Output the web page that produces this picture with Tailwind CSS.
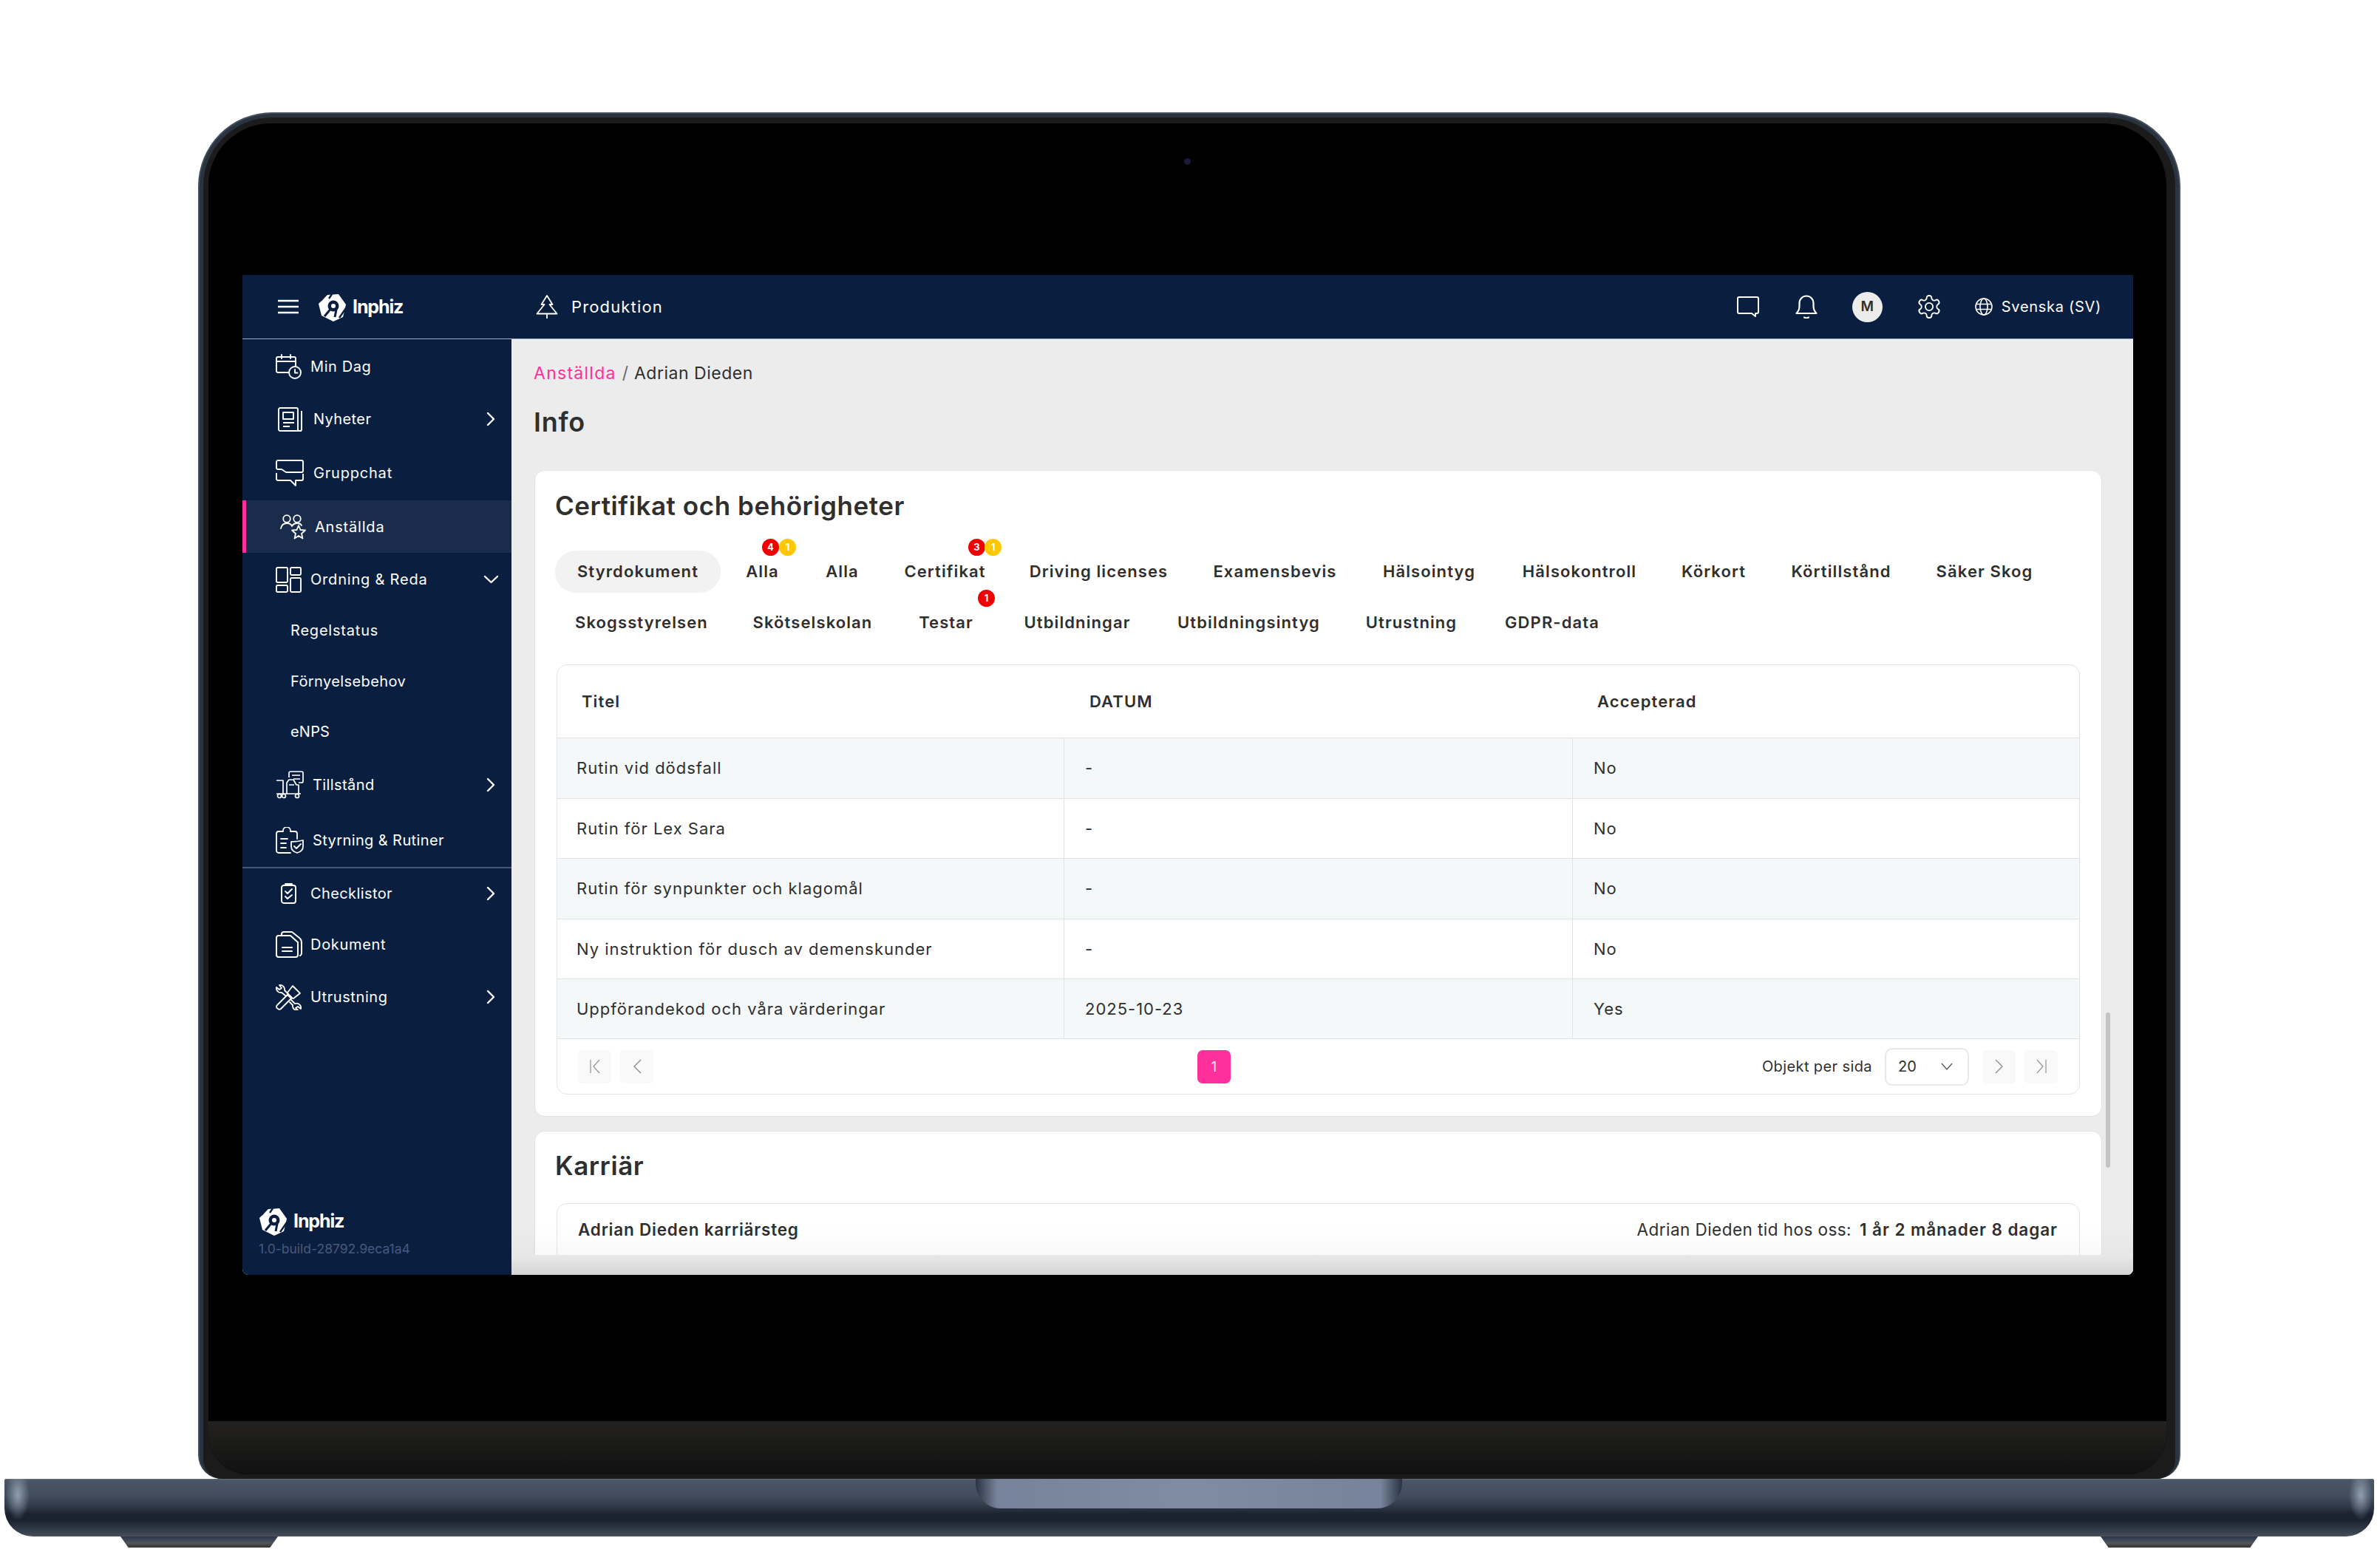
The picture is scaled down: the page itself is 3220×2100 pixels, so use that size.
<!DOCTYPE html>
<html lang="sv">
<head>
<meta charset="utf-8">
<title>Inphiz</title>
<script src="https://cdn.jsdelivr.net/npm/@tailwindcss/browser@4"></script>
</head>
<body class="bg-white">
<div class="w-[3220px] h-[2100px] overflow-hidden bg-white pt-[152px] font-[Inter,sans-serif] text-[#2f2f2f]">

  <!-- Lid -->
  <div class="ml-[268px] w-[2682px] h-[1849px] rounded-t-[100px] rounded-b-[32px] bg-[#434e5c] pt-[2px] px-[2px]">
    <div class="w-full h-[1847px] rounded-t-[98px] rounded-b-[30px] bg-[#2a3340] pt-[5px] px-[5px]">
      <div class="w-full h-[1842px] rounded-t-[93px] rounded-b-[26px] bg-[#1b1b1c] pt-[8px] pb-[6px] pl-[7px] pr-[8px]">
      <div class="relative w-[2649px] h-[1828px] rounded-t-[84px] rounded-b-[54px] bg-black overflow-hidden flex flex-col pt-[205px] pl-[46px]">
        <div class="absolute left-[1320px] top-[47px] w-[9px] h-[9px] rounded-full bg-[#1a1a3c]"></div>

        <!-- Screen -->
        <div class="w-[2558px] h-[1353px] shrink-0 rounded-b-[8px] overflow-hidden flex flex-col bg-[#ececec]">

          <!-- Top bar -->
          <header class="h-[87px] shrink-0 bg-[#0a1f40] border-b border-[#9fb0c6] flex items-center text-white">
            <div class="w-[364px] shrink-0 flex items-center pl-[48px]">
              <svg class="w-[28px] h-[20px]" viewBox="0 0 28 20" fill="none" stroke="#fff" stroke-width="2.4"><path d="M0 2h28M0 10h28M0 18h28"/></svg>
              <svg class="w-[40px] h-[41px] ml-[26px]" viewBox="0 0 40 41"><polygon fill="#fff" points="13,4 28,3 38,17 34,34 21,40 5,32 1,16"/><path d="M13 0 4 12M21 0l-6 9M38 22l-9 13" stroke="#0a1f40" stroke-width="2.400" fill="none"/><circle cx="21" cy="19" r="7.500" fill="#0a1f40"/><path d="M19 21 9 33M25 24l-2 10" stroke="#0a1f40" stroke-width="3"/><circle cx="21" cy="19" r="3" fill="#fff"/></svg>
              <span class="ml-[7px] text-[25px] font-bold tracking-[-0.045em] leading-none">Inphiz</span>
            </div>
            <svg class="w-[30px] h-[32px] ml-[33px]" viewBox="0 0 30 32" fill="none" stroke="#fff" stroke-width="1.800" stroke-linejoin="round"><path d="M15 1 7.500 13h4L1.500 25.500h27L18.500 13h4zM15 25.500V32"/></svg>
            <span class="ml-[18px] text-[22px] font-normal tracking-[0.052em]">Produktion</span>
            <div class="ml-auto pr-[43px] flex items-center">
              <svg class="w-[30px] h-[28px]" viewBox="0 0 30 28" fill="none" stroke="#fff" stroke-width="2" stroke-linejoin="round"><path d="M3 1h24a2 2 0 0 1 2 2v18a2 2 0 0 1-2 2h-2v4l-5-4H3a2 2 0 0 1-2-2V3a2 2 0 0 1 2-2z"/></svg>
              <svg class="w-[30px] h-[32px] ml-[49px]" viewBox="0 0 30 32" fill="none" stroke="#fff" stroke-width="2.200" stroke-linecap="round" stroke-linejoin="round"><path d="M1.500 25h27c-3-3-4-5-4-10V11a9.500 9.500 0 0 0-19 0v4c0 5-1 7-4 10z"/><path d="M12 30.500q3 1.500 6 0"/></svg>
              <div class="w-[41px] h-[41px] ml-[47px] rounded-full bg-[#ececec] text-[#2f2f2f] text-[19px] font-semibold flex items-center justify-center">M</div>
              <svg class="w-[36px] h-[36px] ml-[45px]" viewBox="0 0 24 24" fill="none" stroke="#fff" stroke-width="1.250" stroke-linecap="round" stroke-linejoin="round"><path d="M12.220 2h-.44a2 2 0 0 0-2 2v.18a2 2 0 0 1-1 1.730l-.43.25a2 2 0 0 1-2 0l-.15-.08a2 2 0 0 0-2.730.73l-.22.38a2 2 0 0 0 .73 2.730l.15.1a2 2 0 0 1 1 1.720v.51a2 2 0 0 1-1 1.740l-.15.09a2 2 0 0 0-.73 2.730l.22.38a2 2 0 0 0 2.730.73l.15-.08a2 2 0 0 1 2 0l.43.25a2 2 0 0 1 1 1.730V20a2 2 0 0 0 2 2h.44a2 2 0 0 0 2-2v-.18a2 2 0 0 1 1-1.730l.43-.25a2 2 0 0 1 2 0l.15.08a2 2 0 0 0 2.730-.73l.22-.39a2 2 0 0 0-.73-2.730l-.15-.08a2 2 0 0 1-1-1.740v-.5a2 2 0 0 1 1-1.740l.15-.09a2 2 0 0 0 .73-2.730l-.22-.38a2 2 0 0 0-2.730-.73l-.15.08a2 2 0 0 1-2 0l-.43-.25a2 2 0 0 1-1-1.730V4a2 2 0 0 0-2-2z"/><circle cx="12" cy="12" r="3.400"/></svg>
              <svg class="w-[24px] h-[24px] ml-[44px]" viewBox="0 0 24 24" fill="none" stroke="#fff" stroke-width="1.600"><circle cx="12" cy="12" r="11"/><ellipse cx="12" cy="12" rx="5" ry="11"/><path d="M1.500 8.500h21M1.500 15.500h21"/></svg>
              <span class="ml-[12px] text-[20px] tracking-[0.035em] leading-none">Svenska (SV)</span>
            </div>
          </header>

          <div class="flex flex-1 min-h-0">
            <!-- Sidebar -->
            <aside class="w-[364px] shrink-0 bg-[#0a1f40] text-white text-[20px] tracking-[0.03em] flex flex-col">
              <a class="h-[72px] flex items-center pl-[45px] pt-[2px]">
                <svg class="w-[35px] h-[34px] shrink-0" viewBox="0 0 35 34" fill="none" stroke="#fff" stroke-width="1.900" stroke-linecap="round" stroke-linejoin="round"><path d="M17 25H3a2 2 0 0 1-2-2V6a2 2 0 0 1 2-2h22a2 2 0 0 1 2 2v10M1 10h26M8 1v5M20 1v5"/><circle cx="26" cy="25" r="8"/><path d="M26 21v4.500h3.500"/></svg>
                <span class="ml-[12px]">Min Dag</span>
              </a>
              <a class="h-[70px] flex items-center pl-[48px] pr-[22px] pt-[2px]">
                <svg class="w-[35px] h-[33px] shrink-0" viewBox="0 0 35 33" fill="none" stroke="#fff" stroke-width="1.900" stroke-linejoin="round"><path d="M32 32H3a2 2 0 0 1-2-2V3a2 2 0 0 1 2-2h22a2 2 0 0 1 2 2v27a2 2 0 0 0 2 2h1a2 2 0 0 0 2-2V5"/><rect x="7" y="7" width="14" height="9"/><path d="M7 21h15M7 26h9"/></svg>
                <span class="ml-[13px] tracking-[0.02em]">Nyheter</span>
                <svg class="w-[12px] h-[20px] ml-auto" viewBox="0 0 12 20" fill="none" stroke="#fff" stroke-width="2.400" stroke-linecap="round" stroke-linejoin="round"><path d="M2 2l8 8-8 8"/></svg>
              </a>
              <a class="h-[76px] flex items-center pl-[45px] pt-[2px]">
                <svg class="w-[38px] h-[36px] shrink-0" viewBox="0 0 38 36" fill="none" stroke="#fff" stroke-width="1.900" stroke-linejoin="round"><path d="M3 1h32a2 2 0 0 1 2 2v12a2 2 0 0 1-2 2H14l-6-4H3a2 2 0 0 1-2-2V3a2 2 0 0 1 2-2zM37 19v7a2 2 0 0 1-2 2h-8v7l-7-7H3a2 2 0 0 1-2-2v-8"/></svg>
                <span class="ml-[13px] tracking-[0.04em]">Gruppchat</span>
              </a>
              <a class="h-[71px] flex items-center pl-[46px] border-l-[5px] border-[#ff2f9b] bg-[#1a2c4c]">
                <svg class="w-[35px] h-[34px] shrink-0" viewBox="0 0 35 34" fill="none" stroke="#fff" stroke-width="1.800" stroke-linejoin="round" stroke-linecap="round"><circle cx="9" cy="6" r="4.800"/><circle cx="23" cy="6" r="4.800"/><path d="M1 19c1-5 4-7 8-7 3 0 6 1 7 4 1-2 3-4 7-4 3 0 5 1 6 3"/><polygon points="25,15 27.500,21 34,21.500 29,26 30.500,32.500 25,29 19.500,32.500 21,26 16,21.500 22.500,21"/></svg>
                <span class="ml-[12px] tracking-[0.04em]">Anställda</span>
              </a>
              <a class="h-[70px] flex items-center pl-[45px] pr-[17px] pt-[2px]">
                <svg class="w-[35px] h-[35px] shrink-0" viewBox="0 0 35 35" fill="none" stroke="#fff" stroke-width="1.900"><rect x="1" y="1" width="15" height="20" rx="1.500"/><rect x="20" y="1" width="14" height="10" rx="1.500"/><rect x="1" y="25" width="15" height="9" rx="1.500"/><rect x="20" y="15" width="14" height="19" rx="1.500"/></svg>
                <span class="ml-[12px] tracking-[0.04em]">Ordning &amp; Reda</span>
                <svg class="w-[21px] h-[12px] ml-auto" viewBox="0 0 21 12" fill="none" stroke="#fff" stroke-width="2.400" stroke-linecap="round" stroke-linejoin="round"><path d="M2 2l8.500 8L19 2"/></svg>
              </a>
              <a class="h-[68px] flex items-center pl-[65px] pt-[2px] tracking-[0.04em]">Regelstatus</a>
              <a class="h-[69px] flex items-center pl-[65px] pt-[2px] tracking-[0.02em]">Förnyelsebehov</a>
              <a class="h-[68px] flex items-center pl-[65px] pt-[2px] tracking-[0.01em]">eNPS</a>
              <a class="h-[76px] flex items-center pl-[45px] pr-[22px] pt-[2px]">
                <svg class="w-[38px] h-[38px] shrink-0" viewBox="0 0 38 38" fill="none" stroke="#fff" stroke-width="1.700" stroke-linejoin="round"><path d="M18 9V3a2 2 0 0 1 2-2h15a2 2 0 0 1 2 2v11a2 2 0 0 1-2 2h-4M22 6h11M24 11h9"/><path d="M1 13h9v18H1M10 31h24"/><path d="M15 31V16l3-4h6l4 7h3v12M18 19h7"/><circle cx="5" cy="34" r="2.500"/><circle cx="11" cy="34" r="2.500"/><circle cx="29" cy="34" r="2.500"/></svg>
                <span class="ml-[12px] tracking-[0.02em]">Tillstånd</span>
                <svg class="w-[12px] h-[20px] ml-auto" viewBox="0 0 12 20" fill="none" stroke="#fff" stroke-width="2.400" stroke-linecap="round" stroke-linejoin="round"><path d="M2 2l8 8-8 8"/></svg>
              </a>
              <a class="h-[72px] flex items-center pl-[45px] pt-[2px] border-b-[2px] border-[#47587a] box-content">
                <svg class="w-[38px] h-[36px] shrink-0" viewBox="0 0 38 36" fill="none" stroke="#fff" stroke-width="1.800" stroke-linejoin="round" stroke-linecap="round"><path d="M20 35H4a3 3 0 0 1-3-3V9a3 3 0 0 1 3-3h6V5a5 5 0 0 1 10 0v1h6a3 3 0 0 1 3 3v7"/><path d="M7 16h9M7 22h7M7 28h7"/><path d="M21 20q8 0 16-2v8c0 5-4 8-8 9-4-1-8-4-8-9z"/><path d="M25 26l3 3 6-6"/></svg>
                <span class="ml-[12px] tracking-[0.02em]">Styrning &amp; Rutiner</span>
              </a>
              <a class="h-[66px] flex items-center pl-[52px] pr-[22px] pt-[2px]">
                <svg class="w-[21px] h-[28px] shrink-0" viewBox="0 0 21 28" fill="none" stroke="#fff" stroke-width="1.900" stroke-linejoin="round" stroke-linecap="round"><rect x="1" y="3" width="19" height="24" rx="3"/><path d="M6 3V1h9v2M6 11l3 3 6-6M6 18l3 3 6-5"/></svg>
                <span class="ml-[19px] tracking-[0.02em]">Checklistor</span>
                <svg class="w-[12px] h-[20px] ml-auto" viewBox="0 0 12 20" fill="none" stroke="#fff" stroke-width="2.400" stroke-linecap="round" stroke-linejoin="round"><path d="M2 2l8 8-8 8"/></svg>
              </a>
              <a class="h-[72px] flex items-center pl-[45px] pt-[2px]">
                <svg class="w-[36px] h-[36px] shrink-0" viewBox="0 0 36 36" fill="none" stroke="#fff" stroke-width="2" stroke-linejoin="round" stroke-linecap="round"><path d="M4 6h16l10 9v17a3 3 0 0 1-3 3H4a3 3 0 0 1-3-3V9a3 3 0 0 1 3-3zM8 5V4a3 3 0 0 1 3-3h11l10 8M33 10q2 2 2 5v15q0 2-2 3"/><path d="M9 22h13M9 27h13"/></svg>
                <span class="ml-[11px] tracking-[0.035em]">Dokument</span>
              </a>
              <a class="h-[70px] flex items-center pl-[45px] pr-[22px] pt-[2px]">
                <svg class="w-[35px] h-[35px] shrink-0" viewBox="0 0 35 35" fill="none" stroke="#fff" stroke-width="1.800" stroke-linejoin="round" stroke-linecap="round"><path d="M3 33a3 3 0 0 1-1-5L17 13l5 5L7 33a3 3 0 0 1-4 0zM16 11l7-9 10 10-9 7-4-1-4-4z"/><path d="M13 15 8 11a6 6 0 0 1-7-7l4 3 3-2-3-4a6 6 0 0 1 7 7l5 5M21 21l5 5a6 6 0 0 1 8 7l-4-3-3 2 3 3a6 6 0 0 1-7-7l-4-4"/></svg>
                <span class="ml-[12px]">Utrustning</span>
                <svg class="w-[12px] h-[20px] ml-auto" viewBox="0 0 12 20" fill="none" stroke="#fff" stroke-width="2.400" stroke-linecap="round" stroke-linejoin="round"><path d="M2 2l8 8-8 8"/></svg>
              </a>
              <div class="mt-auto pl-[22px] pb-[24px]">
                <div class="flex items-center">
                  <svg class="w-[40px] h-[41px]" viewBox="0 0 40 41"><polygon fill="#fff" points="13,4 28,3 38,17 34,34 21,40 5,32 1,16"/><path d="M13 0 4 12M21 0l-6 9M38 22l-9 13" stroke="#0a1f40" stroke-width="2.400" fill="none"/><circle cx="21" cy="19" r="7.500" fill="#0a1f40"/><path d="M19 21 9 33M25 24l-2 10" stroke="#0a1f40" stroke-width="3"/><circle cx="21" cy="19" r="3" fill="#fff"/></svg>
                  <span class="ml-[7px] text-[25px] font-bold tracking-[-0.045em] leading-none">Inphiz</span>
                </div>
                <div class="mt-[6px] text-[17.500px] tracking-[0em] leading-[22px] text-[#48597a]">1.0-build-28792.9eca1a4</div>
              </div>
            </aside>

            <!-- Main -->
            <main class="relative flex-1 min-w-0 overflow-hidden bg-[#ececec] pl-[31px] pr-[42px] pt-[31px]">
              <div class="h-[30px] -ml-[1px] flex items-center text-[23px]">
                <span class="text-[#ff2f9b] tracking-[0.055em]">Anställda</span><span class="mx-[8px] text-[#6a6a6a]">/</span><span class="tracking-[0.022em]">Adrian Dieden</span>
              </div>
              <h1 class="h-[50px] -ml-[1px] mt-[26px] flex items-center text-[36px] font-semibold tracking-[0.02em]">Info</h1>

              <section class="mt-[40px] h-[875px] rounded-[14px] border border-[#e3e3e3] bg-white px-[29px] pt-[22px]">
                <h2 class="h-[50px] -ml-[2px] flex items-center text-[35px] font-semibold tracking-[0.016em]">Certifikat och behörigheter</h2>

                <div class="mt-[36px] -ml-[2px] flex flex-col gap-[12px] text-[22px] font-semibold tracking-[0.05em] whitespace-nowrap">
                  <div class="flex h-[57px] items-center text-center">
                    <div class="w-[224px] h-[57px] rounded-full bg-[#f2f2f2] flex items-center justify-center">Styrdokument</div>
                    <div class="relative w-[113px]">Alla
                      <span class="absolute left-[56px] -top-[28px] w-[23px] h-[23px] rounded-full bg-[#f00000] text-white text-[13px] font-bold tracking-normal flex items-center justify-center">4</span>
                      <span class="absolute left-[79px] -top-[28px] w-[23px] h-[23px] rounded-full bg-[#ffc800] text-white text-[13px] font-bold tracking-normal flex items-center justify-center">1</span>
                    </div>
                    <div class="w-[103px]">Alla</div>
                    <div class="relative w-[175px]">Certifikat
                      <span class="absolute left-[119px] -top-[28px] w-[23px] h-[23px] rounded-full bg-[#f00000] text-white text-[13px] font-bold tracking-normal flex items-center justify-center">3</span>
                      <span class="absolute left-[141px] -top-[28px] w-[23px] h-[23px] rounded-full bg-[#ffc800] text-white text-[13px] font-bold tracking-normal flex items-center justify-center">1</span>
                    </div>
                    <div class="w-[241px]">Driving licenses</div>
                    <div class="w-[236px]">Examensbevis</div>
                    <div class="w-[181px]">Hälsointyg</div>
                    <div class="w-[226px]">Hälsokontroll</div>
                    <div class="w-[137px]">Körkort</div>
                    <div class="w-[208px]">Körtillstånd</div>
                    <div class="w-[180px]">Säker Skog</div>
                  </div>
                  <div class="flex h-[57px] items-center text-center">
                    <div class="w-[234px]">Skogsstyrelsen</div>
                    <div class="w-[229px]">Skötselskolan</div>
                    <div class="relative w-[132px]">Testar
                      <span class="absolute left-[109px] -top-[28px] w-[23px] h-[23px] rounded-full bg-[#f00000] text-white text-[13px] font-bold tracking-normal flex items-center justify-center">1</span>
                    </div>
                    <div class="w-[223px]">Utbildningar</div>
                    <div class="w-[241px]">Utbildningsintyg</div>
                    <div class="w-[199px]">Utrustning</div>
                    <div class="w-[182px]">GDPR-data</div>
                  </div>
                </div>

                <div class="mt-[28px] h-[582px] rounded-[14px] border border-[#e2e4ea] overflow-hidden flex flex-col">
                  <div class="h-[98px] shrink-0 grid grid-cols-[686px_688px_1fr] items-center text-[22px] font-semibold tracking-[0.05em]">
                    <div class="pl-[33px]">Titel</div><div class="pl-[34px]">DATUM</div><div class="pl-[33px]">Accepterad</div>
                  </div>
                  <div class="h-[82px] shrink-0 grid grid-cols-[686px_688px_1fr] border-t border-[#dfe3e6] bg-[#f4f8f9] text-[22px] tracking-[0.045em]">
                    <div class="pl-[26px] flex items-center border-r border-[#dfe3e6]">Rutin vid dödsfall</div><div class="pl-[28px] flex items-center border-r border-[#dfe3e6]">-</div><div class="pl-[28px] flex items-center">No</div>
                  </div>
                  <div class="h-[81px] shrink-0 grid grid-cols-[686px_688px_1fr] border-t border-[#dfe3e6] bg-white text-[22px] tracking-[0.045em]">
                    <div class="pl-[26px] flex items-center border-r border-[#dfe3e6]">Rutin för Lex Sara</div><div class="pl-[28px] flex items-center border-r border-[#dfe3e6]">-</div><div class="pl-[28px] flex items-center">No</div>
                  </div>
                  <div class="h-[82px] shrink-0 grid grid-cols-[686px_688px_1fr] border-t border-[#dfe3e6] bg-[#f4f8f9] text-[22px] tracking-[0.045em]">
                    <div class="pl-[26px] flex items-center border-r border-[#dfe3e6]">Rutin för synpunkter och klagomål</div><div class="pl-[28px] flex items-center border-r border-[#dfe3e6]">-</div><div class="pl-[28px] flex items-center">No</div>
                  </div>
                  <div class="h-[81px] shrink-0 grid grid-cols-[686px_688px_1fr] border-t border-[#dfe3e6] bg-white text-[22px] tracking-[0.045em]">
                    <div class="pl-[26px] flex items-center border-r border-[#dfe3e6]">Ny instruktion för dusch av demenskunder</div><div class="pl-[28px] flex items-center border-r border-[#dfe3e6]">-</div><div class="pl-[28px] flex items-center">No</div>
                  </div>
                  <div class="h-[81px] shrink-0 grid grid-cols-[686px_688px_1fr] border-t border-[#dfe3e6] bg-[#f4f8f9] text-[22px] tracking-[0.045em]">
                    <div class="pl-[26px] flex items-center border-r border-[#dfe3e6]">Uppförandekod och våra värderingar</div><div class="pl-[28px] flex items-center border-r border-[#dfe3e6]">2025-10-23</div><div class="pl-[28px] flex items-center">Yes</div>
                  </div>
                  <div class="flex-1 border-t border-[#dfe3e6] flex items-center pl-[28px] pr-[29px]">
                    <div class="w-[45px] h-[45px] rounded-[6px] bg-[#f9f9f9] flex items-center justify-center"><svg class="w-[16px] h-[20px]" viewBox="0 0 16 20" fill="none" stroke="#9a9a9a" stroke-width="1.300"><path d="M2 1v18M14 1 6 10l8 9"/></svg></div>
                    <div class="w-[45px] h-[45px] ml-[12px] rounded-[6px] bg-[#f9f9f9] flex items-center justify-center"><svg class="w-[12px] h-[20px]" viewBox="0 0 12 20" fill="none" stroke="#8a8a8a" stroke-width="1.300"><path d="M11 1 2 10l9 9"/></svg></div>
                    <div class="w-[45px] h-[45px] ml-[736px] rounded-[7px] bg-[#ff2f9b] text-white text-[18px] flex items-center justify-center">1</div>
                    <span class="ml-auto text-[20px] tracking-[0.02em]">Objekt per sida</span>
                    <div class="w-[114px] h-[51px] ml-[17px] rounded-[10px] border-2 border-[#e6e8ee] flex items-center justify-between pl-[16px] pr-[20px] text-[20px]">20<svg class="w-[16px] h-[10px]" viewBox="0 0 16 10" fill="none" stroke="#555" stroke-width="1.300"><path d="M1 1l7 8 7-8"/></svg></div>
                    <div class="w-[45px] h-[45px] ml-[18px] rounded-[6px] bg-[#f9f9f9] flex items-center justify-center"><svg class="w-[12px] h-[20px]" viewBox="0 0 12 20" fill="none" stroke="#8a8a8a" stroke-width="1.300"><path d="m1 1 9 9-9 9"/></svg></div>
                    <div class="w-[45px] h-[45px] ml-[12px] rounded-[6px] bg-[#f9f9f9] flex items-center justify-center"><svg class="w-[16px] h-[20px]" viewBox="0 0 16 20" fill="none" stroke="#9a9a9a" stroke-width="1.300"><path d="M14 1v18M2 1l8 9-8 9"/></svg></div>
                  </div>
                </div>
              </section>

              <section class="mt-[19px] h-[400px] rounded-[14px] border border-[#e3e3e3] bg-white px-[29px] pt-[21px]">
                <h2 class="h-[50px] -ml-[2px] flex items-center text-[35px] font-semibold tracking-[0.016em]">Karriär</h2>
                <div class="mt-[26px] h-[300px] rounded-[14px] border border-[#e2e4ea] pl-[28px] pr-[29px] pt-[20px]">
                  <div class="h-[30px] flex items-center justify-between text-[22.500px]">
                    <span class="font-semibold tracking-[0.035em]">Adrian Dieden karriärsteg</span>
                    <span class="tracking-[0.02em]">Adrian Dieden tid hos oss:<b class="ml-[11px] font-semibold tracking-[0.042em]">1 år 2 månader 8 dagar</b></span>
                  </div>
                </div>
              </section>

              <div class="absolute top-[911px] right-[31px] w-[6px] h-[210px] rounded-full bg-[#c4c4c4]"></div>
              <div class="absolute left-0 right-0 bottom-[27px] h-[40px] bg-[linear-gradient(180deg,transparent,rgba(0,0,0,0.025))]"></div>
              <div class="absolute left-0 right-0 bottom-0 h-[27px] bg-[linear-gradient(180deg,#e9e9e9,#d4d4d4)]"></div>
            </main>
          </div>
        </div>

        <!-- Bottom bezel strip -->
        <div class="mt-auto -ml-[46px] h-[72px] shrink-0 bg-[linear-gradient(180deg,#232220,#111111)]"></div>
      </div>
      </div>
    </div>
  </div>

  <!-- Base -->
  <div class="relative ml-[6px] w-[3206px] h-[78px] rounded-t-[2px] rounded-b-[38px] overflow-hidden bg-[linear-gradient(180deg,#66707c_0,#4a5663_2px,#414d5b_30%,#2f3947_48%,#1a212d_62%,#1c2330_72%,#38424f_93%,#4c505c_100%)]">
    <div class="absolute left-0 top-0 w-[60px] h-full bg-[radial-gradient(ellipse_16px_34px_at_18px_22px,rgba(170,185,205,0.75),transparent)]"></div>
    <div class="absolute right-0 top-0 w-[60px] h-full bg-[radial-gradient(ellipse_16px_34px_at_42px_22px,rgba(170,185,205,0.75),transparent)]"></div>
    <div class="absolute left-[1314px] top-0 w-[577px] h-[40px] rounded-b-[34px] bg-[linear-gradient(90deg,#2a3342,#76839a_5%,#7f8ca1_50%,#76839a_95%,#2a3342)]"></div>
  </div>
  <!-- Feet -->
  <div class="flex">
    <div class="ml-[163px] w-[213px] h-[15px] [clip-path:polygon(0_0,100%_0,95%_100%,5%_100%)] bg-[linear-gradient(180deg,#2d3745,#465260_50%,#555555_60%,#333333)]"></div>
    <div class="ml-[2466px] w-[213px] h-[15px] [clip-path:polygon(0_0,100%_0,95%_100%,5%_100%)] bg-[linear-gradient(180deg,#2d3745,#465260_50%,#555555_60%,#333333)]"></div>
  </div>
</div>
</body>
</html>
